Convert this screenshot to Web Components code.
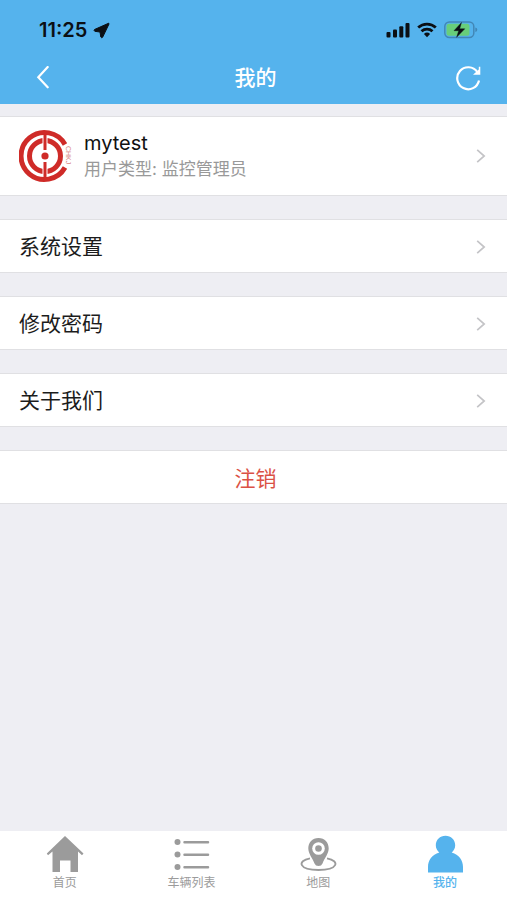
<!DOCTYPE html>
<html lang="zh-CN">
<head>
<meta charset="utf-8">
<meta name="viewport" content="width=device-width, initial-scale=1">
<title>我的</title>
<style>
  html, body { margin: 0; height: 100%; }
  body {
    --blue: #55b3ed;
    --grey: #9b9b9b;
    --line: #e0e0e3;
    font-family: Inter, "Noto Sans CJK SC", sans-serif;
    font-size: 21px;
    color: #1c1c1c;
    background: #eeeef3;
  }
</style>
</head>
<body>
<app-screen>
  <status-bar slot="top" time="11:25"></status-bar>
  <nav-bar slot="top">我的</nav-bar>
  <profile-card>
    <span slot="name">mytest</span>
    <span slot="role">用户类型: 监控管理员</span>
  </profile-card>
  <menu-row>系统设置</menu-row>
  <menu-row>修改密码</menu-row>
  <menu-row>关于我们</menu-row>
  <logout-row>注销</logout-row>
  <tab-bar slot="bottom">
    <tab-item icon="home">首页</tab-item>
    <tab-item icon="list">车辆列表</tab-item>
    <tab-item icon="map">地图</tab-item>
    <tab-item icon="user" active>我的</tab-item>
  </tab-bar>
</app-screen>

<script>
const define = (name, render) => customElements.define(name, class extends HTMLElement {
  constructor() {
    super();
    this.attachShadow({ mode: 'open' });
  }
  connectedCallback() {
    this.shadowRoot.innerHTML = render(this);
  }
});

const reset = `
  * { box-sizing: border-box; }
  svg { display: block; flex: none; }
  button, a { font: inherit; color: inherit; text-decoration: none; background: none; border: 0; margin: 0; padding: 0; cursor: pointer; }
`;

const chevron = `<svg width="10" height="16" viewBox="0 0 10 16" fill="none" stroke="#c4c4c7" stroke-width="1.700" aria-hidden="true"><path d="M1.2 1.8 8.2 8 1.2 14.2"/></svg>`;

define('app-screen', () => `
  <style>${reset}
    :host { display: flex; flex-direction: column; min-height: 100vh; }
    main { flex: 1; display: flex; flex-direction: column; gap: 23px; padding: 12px 0 24px; }
  </style>
  <header><slot name="top"></slot></header>
  <main><slot></slot></main>
  <slot name="bottom"></slot>`);

define('status-bar', el => `
  <style>${reset}
    :host { display: flex; justify-content: space-between; align-items: center; height: 52px; padding: 8px 29px 0 39px; box-sizing: border-box; background: var(--blue); color: #0b0f14; }
    .time { display: flex; align-items: center; gap: 6px; font-size: 20px; font-weight: 600; line-height: 24px; }
    .signals { display: flex; align-items: center; gap: 7px; }
  </style>
  <div class="time"><span>${el.getAttribute('time')}</span>
    <svg width="17" height="17" viewBox="0 0 17 17" aria-hidden="true"><path d="M15.500 1.300 1.500 7.500Q.6 8.700 1.800 9.300L7 10 7.800 15Q8.600 16.300 9.600 15.300L16 2Q16.200 1.200 15.500 1.300Z" fill="currentColor" stroke="currentColor" stroke-width="1"/></svg>
  </div>
  <div class="signals">
    <svg width="24" height="16" viewBox="0 0 24 16" fill="currentColor" aria-hidden="true"><rect x=".5" y="10" width="4" height="5.500" rx="1"/><rect x="7" y="7.500" width="4" height="8" rx="1"/><rect x="13.300" y="4.300" width="4" height="11.200" rx="1"/><rect x="19.500" y="1" width="4" height="14.500" rx="1"/></svg>
    <svg width="20" height="16" viewBox="0 0 20 16" fill="none" stroke="currentColor" stroke-width="2.800" aria-hidden="true"><path d="M1.200 5.500a13 13 0 0 1 17.600 0M4.500 9.300a8.200 8.200 0 0 1 11 0"/><path d="M6.900 12a4.600 4.600 0 0 1 6.200 0L10 15.200Z" fill="currentColor" stroke="none"/></svg>
    <svg width="34" height="18" viewBox="0 0 34 18" aria-hidden="true"><rect x=".8" y="1" width="29" height="15.500" rx="4.500" fill="none" stroke="#4287b6" stroke-width="1.500"/><path d="M31.300 6.500q2 .5 2 2.300t-2 2.300Z" fill="#4287b6"/><rect x="2.500" y="2.800" width="23" height="12" rx="2.500" fill="#68ce7a"/><path d="M17.500 1.500 10 9.700h4.700L12.600 16.300 20.800 7.800h-5.100Z" fill="currentColor" stroke="currentColor" stroke-width=".4"/></svg>
  </div>`);

define('nav-bar', () => `
  <style>${reset}
    :host { display: grid; grid-template-columns: 1fr auto 1fr; align-items: center; height: 52px; padding: 0 25px 0 29px; box-sizing: border-box; background: var(--blue); color: #fff; }
    h1 { margin: 0; font-size: 21px; line-height: 30px; font-weight: 500; }
    button { display: grid; place-items: center; width: 28px; height: 32px; }
    .refresh { justify-self: end; }
  </style>
  <button type="button" aria-label="返回"><svg width="14" height="24" viewBox="0 0 14 24" fill="none" stroke="currentColor" stroke-width="2.200" stroke-linecap="round" aria-hidden="true"><path d="M11.700 1 2.300 11.200 11.700 21.300"/></svg></button>
  <h1><slot></slot></h1>
  <button class="refresh" type="button" aria-label="刷新"><svg width="28" height="26" viewBox="0 0 28 26" fill="none" stroke="currentColor" stroke-width="2.200" aria-hidden="true"><path d="M25 15.500A11 11 0 1 1 23.300 7"/><path d="M26.300 1.800V9.800H19L22.600 6.600 24.800 4.500V1.800Z" fill="currentColor" stroke="none"/></svg></button>`);

define('profile-card', () => `
  <style>${reset}
    :host { display: block; background: #fff; border: solid var(--line); border-width: 1px 0; }
    a { display: flex; align-items: center; gap: 12px; min-height: 78px; padding: 0 21px 0 19px; }
    .text { flex: 1; }
    .name { font-size: 20px; line-height: 26px; color: #111; }
    .role { font-size: 17px; line-height: 26px; color: #999; }
  </style>
  <a href="#profile">
    <svg width="53" height="54" viewBox="0 0 53 54" fill="none" stroke="#cf2b28" aria-hidden="true">
      <path d="M46 15.500A23.500 23.500 0 1 0 46 38.500" stroke-width="5"/>
      <circle cx="26" cy="27" r="15.500" stroke-width="5"/>
      <path d="M26 9V20M26 34V45" stroke="#fff" stroke-width="5"/>
      <path d="M26 2V21M26 33V52" stroke-width="3"/>
      <circle cx="26" cy="27" r="3.600" fill="#cf2b28" stroke="none"/>
      <text transform="translate(47 17) rotate(90)" text-rendering="geometricPrecision" font-family="Liberation Sans, sans-serif" font-size="7" fill="#d98583" stroke="none">CHKJ</text>
    </svg>
    <div class="text"><div class="name"><slot name="name"></slot></div><div class="role"><slot name="role"></slot></div></div>
    ${chevron}
  </a>`);

define('menu-row', () => `
  <style>${reset}
    :host { display: block; background: #fff; border: solid var(--line); border-width: 1px 0; }
    a { display: flex; align-items: center; justify-content: space-between; min-height: 52px; padding: 2px 21px 0 19px; line-height: 30px; }
  </style>
  <a href="#"><span><slot></slot></span>${chevron}</a>`);

define('logout-row', () => `
  <style>${reset}
    :host { display: block; background: #fff; border: solid var(--line); border-width: 1px 0; }
    button { display: block; width: 100%; min-height: 52px; padding: 4px 0 0 4px; line-height: 30px; color: #db5145; }
  </style>
  <button type="button"><slot></slot></button>`);

define('tab-bar', () => `
  <style>${reset}
    :host { display: block; background: #fff; }
    nav { display: grid; grid-template-columns: repeat(4, 1fr); min-height: 69px; }
  </style>
  <nav><slot></slot></nav>`);

const tabIcons = {
  home: `<path d="M20 1 1.800 18.500 3 20.200 7.500 16.500V37H15V25.500H25.500V37H33V16.500L37 20.200 38.500 18.500Z"/>`,
  list: `<circle cx="5.500" cy="7" r="3"/><circle cx="5.500" cy="19.500" r="3"/><circle cx="5.500" cy="32" r="3"/><path d="M12.500 7.300H36M12.500 19.800H36M12.500 32.300H36" fill="none" stroke="currentColor" stroke-width="2.500" stroke-linecap="round"/>`,
  map: `<path d="M20.500 3C14.200 3 10.300 7.500 10.300 13.300 10.300 19 14.500 23 16.500 28.500Q17.500 31 20.500 31T24.500 28.500C26.500 23 30.700 19 30.700 13.300 30.700 7.500 26.800 3 20.500 3Z"/><circle cx="20.500" cy="13.500" r="6.300" fill="#fff"/><circle cx="20.500" cy="13.500" r="3.300"/><path d="M12 23.300C-1.500 26 1 35 20.500 35S42.500 26 29 23.300" fill="none" stroke="currentColor" stroke-width="1.800"/>`,
  user: `<path d="M20.500 .8C15 .8 10.800 4.800 10.800 10.300 10.800 13.300 12.200 15.800 14.300 17.500 7 20 3 25 3 32V37.500H38V32C38 25 34 20 26.700 17.500 28.800 15.800 30.200 13.300 30.200 10.300 30.200 4.800 26 .8 20.500 .8Z"/>`
};

define('tab-item', el => `
  <style>${reset}
    :host { display: block; color: var(--grey); }
    :host([active]) { color: var(--blue); }
    a { display: flex; flex-direction: column; align-items: center; padding: 4px 0 0 3px; font-size: 12px; line-height: 18px; }
    :host([active]) a { font-weight: 500; }
    svg { margin-bottom: 1px; }
  </style>
  <a href="#${el.getAttribute('icon')}"${el.hasAttribute('active') ? ' aria-current="page"' : ''}>
    <svg width="40" height="38" viewBox="0 0 40 38" fill="currentColor" aria-hidden="true">${tabIcons[el.getAttribute('icon')]}</svg>
    <span><slot></slot></span>
  </a>`);
</script>
</body>
</html>
